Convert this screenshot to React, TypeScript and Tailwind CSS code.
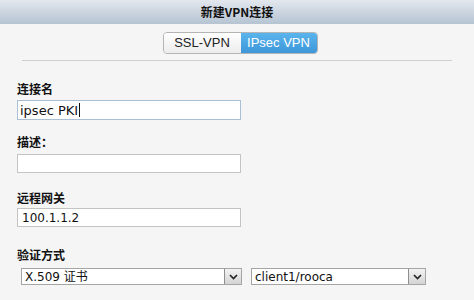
import { useState } from "react";

function Chevron() {
  return (
    <svg width="9" height="6" viewBox="0 0 9 6">
      <path d="M1 1 L4.5 4.5 L8 1" fill="none" stroke="#222" strokeWidth="1.6" />
    </svg>
  );
}

function Select({ value, width }: { value: string; width: string }) {
  return (
    <div
      className={`${width} h-[17px] flex items-stretch border border-[#a5a5a5] bg-white`}
    >
      <div className="flex-1 flex items-center pl-[3px] text-[12px] text-[#111] font-['DejaVu_Sans','Noto_Sans_CJK_SC',sans-serif] leading-none">
        {value}
      </div>
      <div className="w-[17px] flex items-center justify-center border-l border-[#8e8e8e] bg-gradient-to-b from-[#f2f2f2] to-[#d4d4d4]">
        <Chevron />
      </div>
    </div>
  );
}

export default function App() {
  const [mode, setMode] = useState("ipsec");
  const label =
    "h-[12px] text-[12px] font-bold text-[#111] font-['Noto_Sans_CJK_SC',sans-serif] leading-[12px]";
  const input =
    "w-[224px] border bg-white flex items-center text-[#111] font-['DejaVu_Sans',sans-serif] leading-none";

  return (
    <section className="w-[474px] h-[300px] bg-[#f5f5f5] overflow-hidden">
      <div className="h-[24px] bg-gradient-to-b from-[#e3e8ee] to-[#b5c3d2] flex items-center justify-center text-[12px] font-bold text-[#111] font-['Noto_Sans_CJK_SC',sans-serif]">
        新建VPN连接
      </div>
      <div className="flex justify-center pt-[8px] pl-[6px]">
        <div className="flex h-[22px] rounded-[4px] border border-[#b4b4b4] overflow-hidden text-[13px] font-['Liberation_Sans',sans-serif]">
          <button
            onClick={() => setMode("ssl")}
            className={`w-[77px] flex items-center justify-center ${
              mode === "ssl"
                ? "bg-gradient-to-b from-[#5ab4ec] to-[#3d97d9] text-white"
                : "bg-gradient-to-b from-[#ffffff] to-[#ececec] text-[#222]"
            }`}
          >
            SSL-VPN
          </button>
          <button
            onClick={() => setMode("ipsec")}
            className={`w-[76px] flex items-center justify-center ${
              mode === "ipsec"
                ? "bg-gradient-to-b from-[#5ab4ec] to-[#3d97d9] text-white"
                : "bg-gradient-to-b from-[#ffffff] to-[#ececec] text-[#222]"
            }`}
          >
            IPsec VPN
          </button>
        </div>
      </div>
      <div className="mx-[22px] mt-[6px] h-px bg-[#cfcfcf]" />

      <div className="pl-[17px] pt-[22px] flex flex-col">
        <p className={label}>连接名</p>
        <div className={`${input} mt-[5px] h-[20px] px-[2px] text-[13px] border-[#a9bfd6]`}>
          ipsec PKI<span className="w-px h-[14px] bg-[#111] ml-px" />
        </div>

        <p className={`${label} mt-[16px]`}>描述：</p>
        <div className={`${input} mt-[6px] h-[19px] border-[#c3c3c3]`} />

        <p className={`${label} mt-[19px]`}>远程网关</p>
        <div className={`${input} mt-[4px] h-[19px] px-[4px] text-[12px] border-[#c3c3c3]`}>
          100.1.1.2
        </div>

        <p className={`${label} mt-[22px]`}>验证方式</p>
        <div className="flex gap-[9px] mt-[7px] pl-[4px]">
          <Select value="X.509 证书" width="w-[221px]" />
          <Select value="client1/rooca" width="w-[175px]" />
        </div>
      </div>
    </section>
  );
}
